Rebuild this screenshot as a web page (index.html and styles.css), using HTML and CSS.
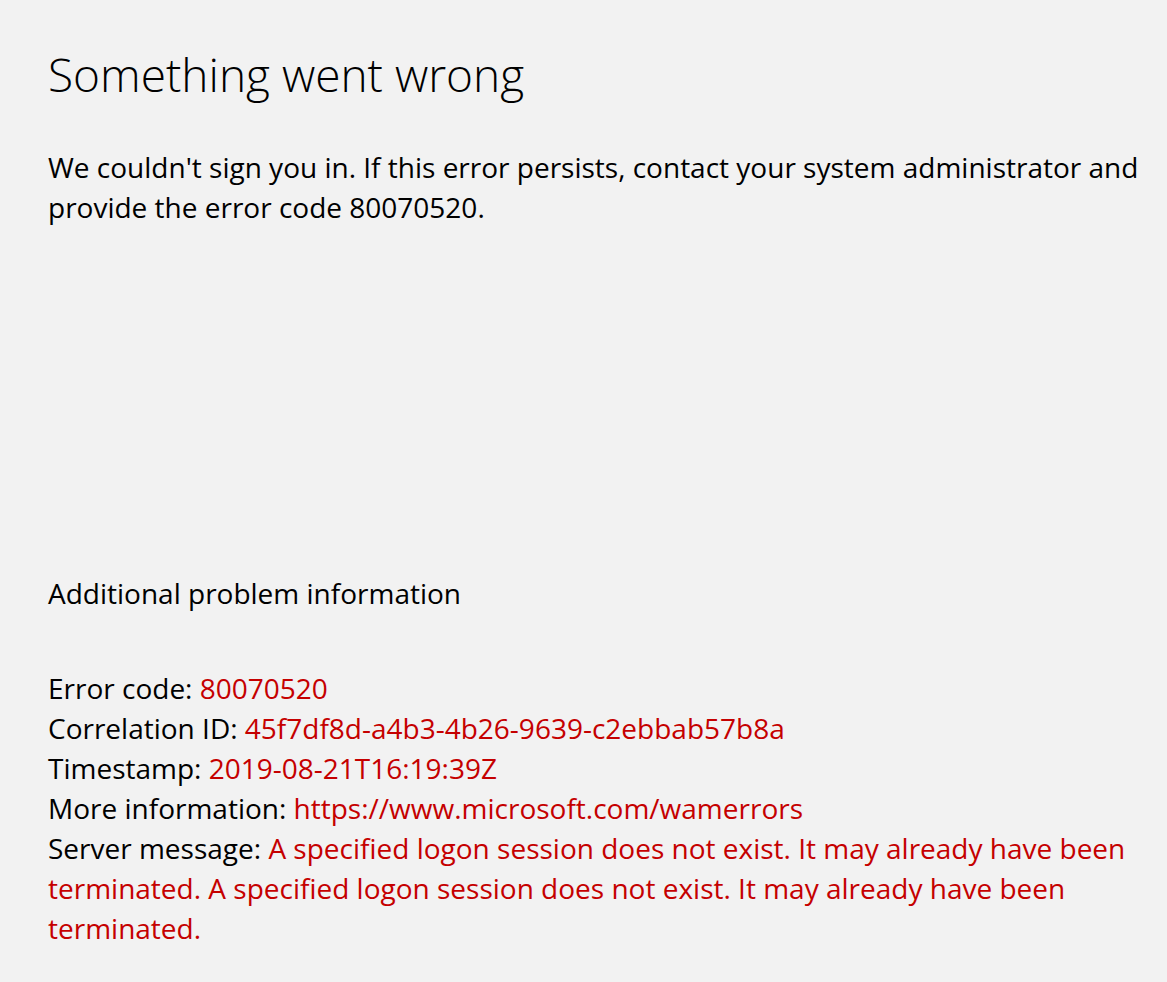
FILE: index.html
```html
<!DOCTYPE html>
<html lang="en">
  <head>
    <meta charset="UTF-8" />
    <meta name="viewport" content="width=device-width, initial-scale=1.0" />
    <title>Something went wrong</title>
    <link rel="stylesheet" href="styles.css">
  </head>

  <body>
    <div class="page">
      <h1 class="title">Something went wrong</h1>
      <p class="message">
        We couldn't sign you in. If this error persists, contact your system administrator and provide the error code 80070520.
      </p>

      <div class="details">
        <h2 class="details-title">Additional problem information</h2>
        <div class="details-list">
          <div class="row">Error code: <span class="value">80070520</span></div>
          <div class="row">Correlation ID: <span class="value">45f7df8d-a4b3-4b26-9639-c2ebbab57b8a</span></div>
          <div class="row">Timestamp: <span class="value">2019-08-21T16:19:39Z</span></div>
          <div class="row">More information: <span class="value">https://www.microsoft.com/wamerrors</span></div>
          <div class="row">Server message: <span class="value">A specified logon session does not exist. It may already have been terminated. A specified logon session does not exist. It may already have been terminated.</span></div>
        </div>
      </div>
    </div>
  </body>
</html>
```

FILE: styles.css
```css
html,
body {
  margin: 0;
  background-color: rgb(242 242 242);
}

body {
  font-family: "Open Sans", "Noto Sans", sans-serif;
  color: rgb(0 0 0);
}

.page {
  padding: 44px 18px 0 48px;
  display: flex;
  flex-direction: column;
}

.title {
  margin: 0;
  font-size: 46px;
  font-weight: 300;
  line-height: 60px;
}

.message {
  margin: 43px 0 0;
  font-size: 28px;
  line-height: 40px;
}

.details {
  margin-top: 346px;
}

.details-title {
  margin: 0;
  font-size: 28px;
  font-weight: 400;
  line-height: 40px;
}

.details-list {
  margin-top: 55px;
  font-size: 28px;
  line-height: 40px;
}

.value {
  color: rgb(197 0 0);
}
```
